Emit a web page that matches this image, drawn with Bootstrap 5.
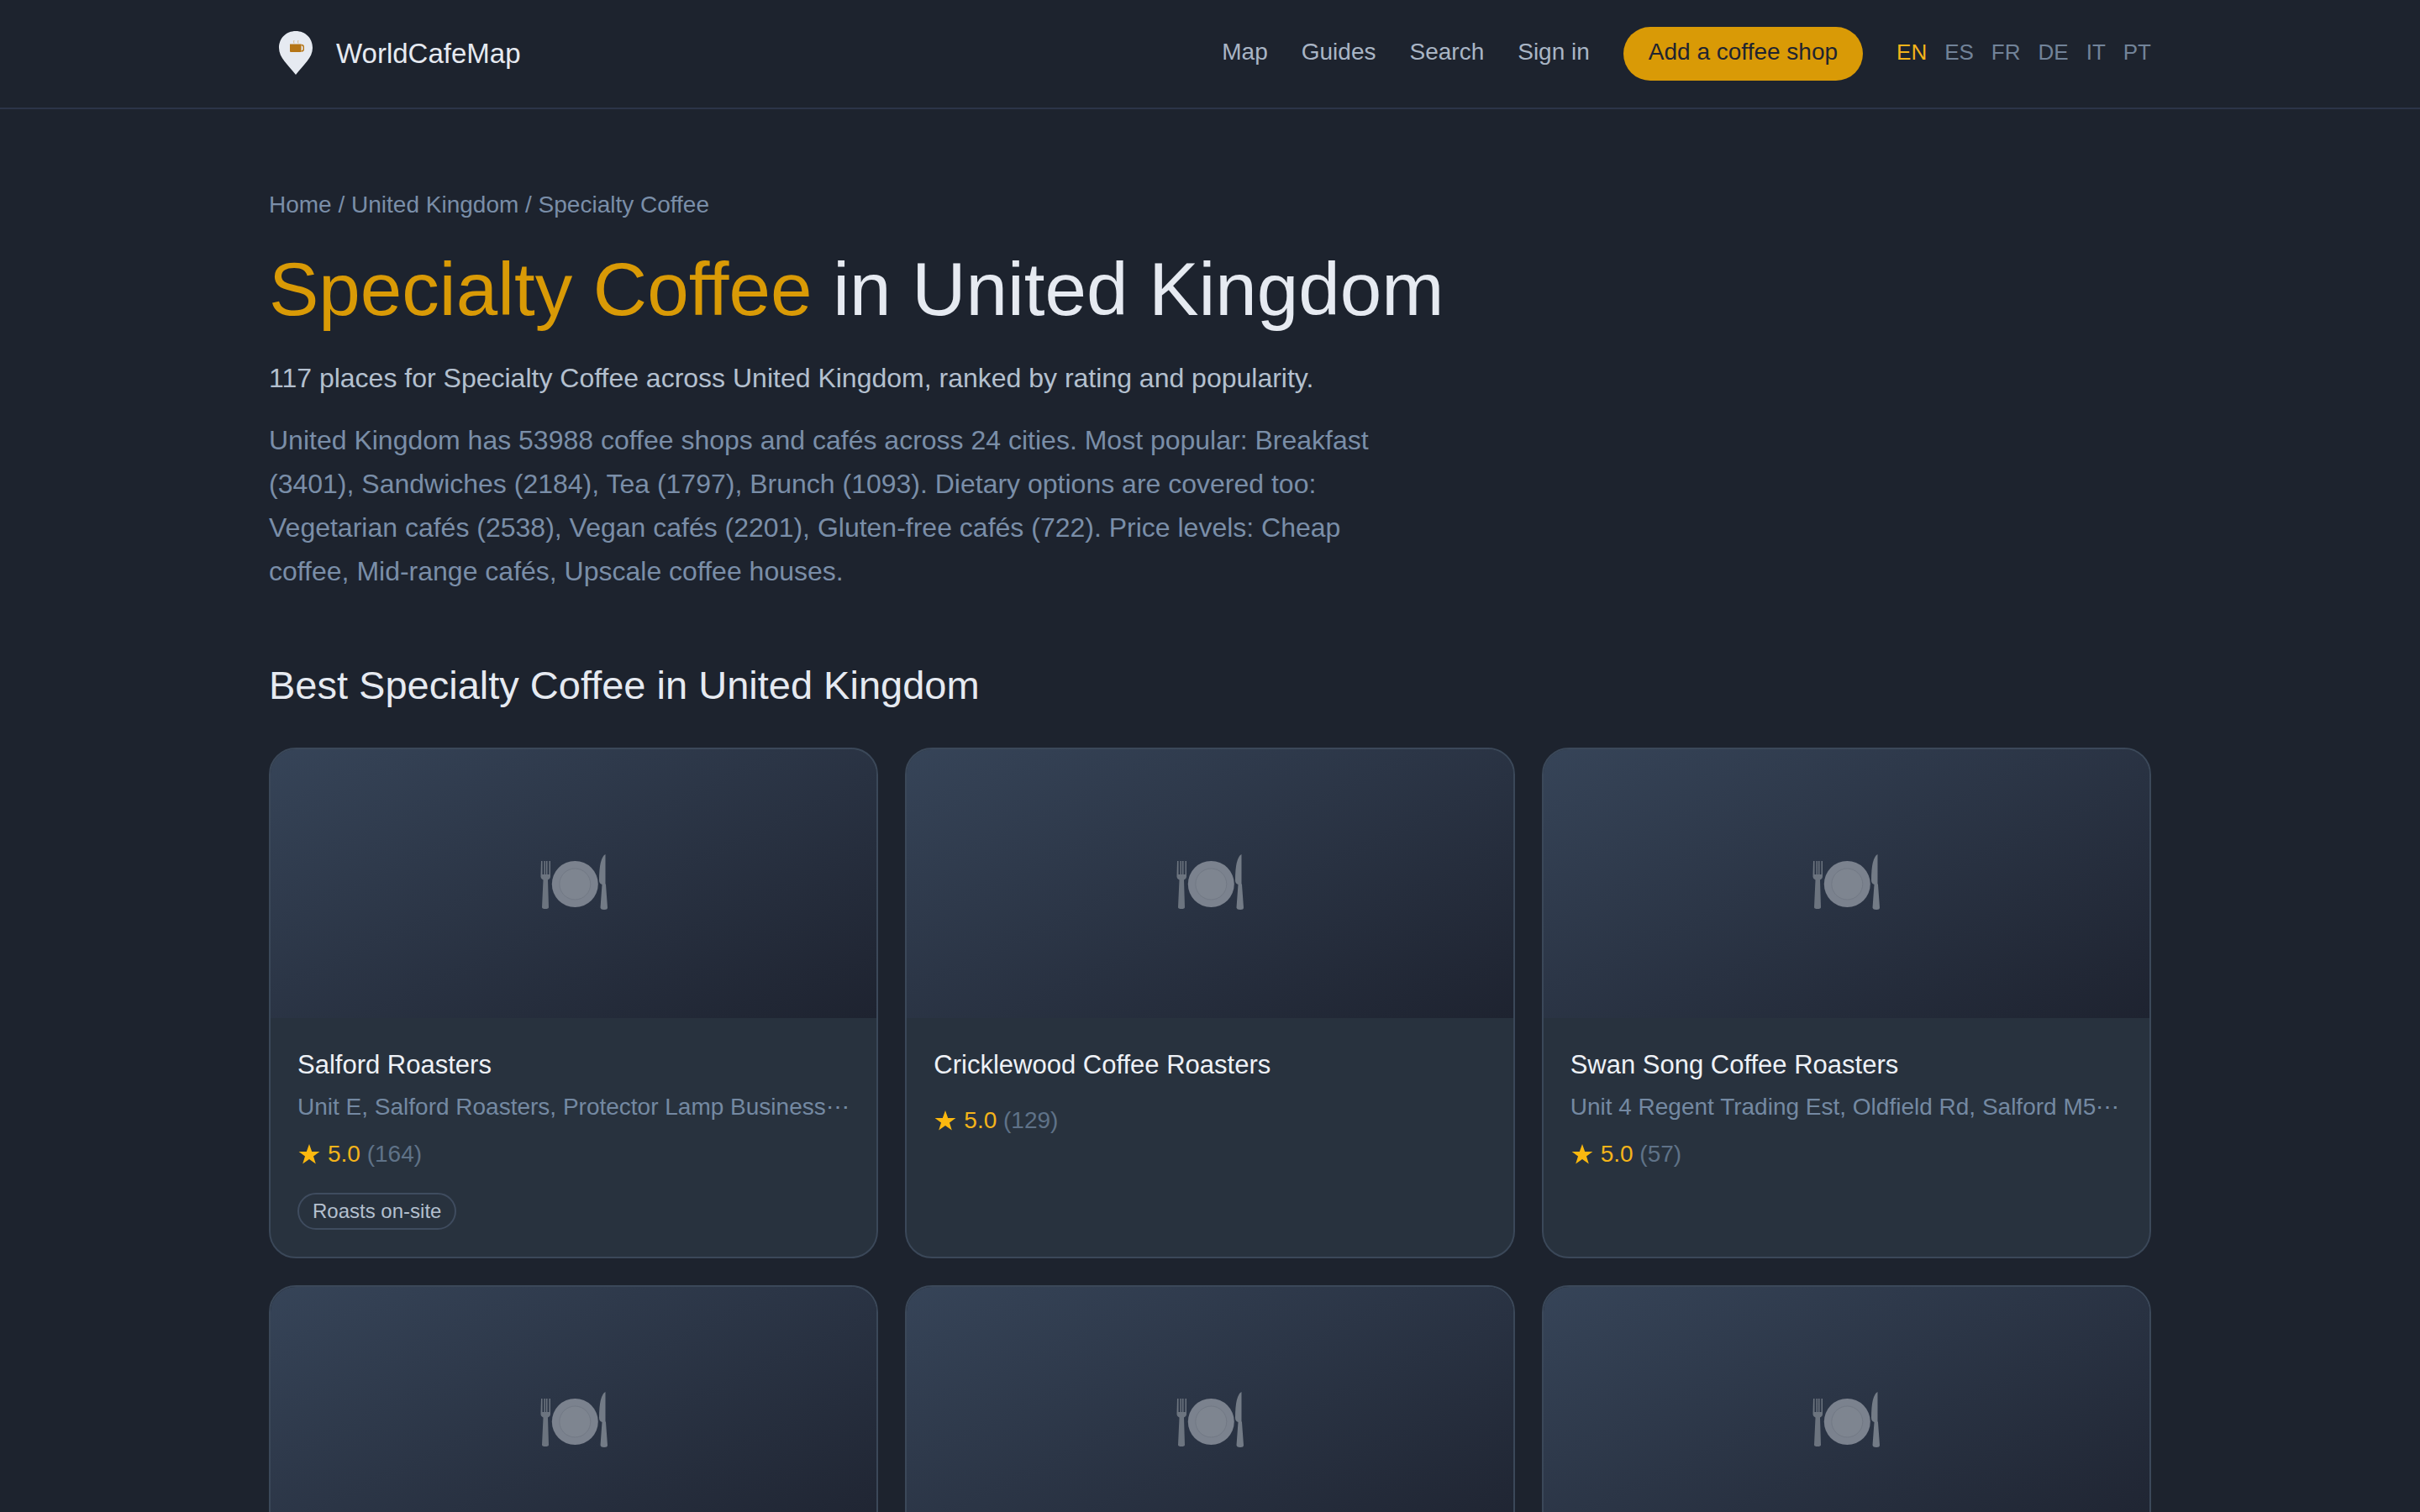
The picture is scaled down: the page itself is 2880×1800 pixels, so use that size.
<!DOCTYPE html>
<html lang="en">
<head>
<meta charset="utf-8">
<meta name="viewport" content="width=device-width, initial-scale=1">
<title>Specialty Coffee in United Kingdom – WorldCafeMap</title>
<link href="https://cdn.jsdelivr.net/npm/bootstrap@5.3.0/dist/css/bootstrap.min.css" rel="stylesheet">
<style>
  body { background: #1d232e; color: #e6eaf1; font-family: "Liberation Sans", Arial, sans-serif; font-size: 28px; line-height: 44px; overflow-x: hidden; }
  a { text-decoration: none; }
  .site-wrap { max-width: 2304px; padding-left: 32px; padding-right: 32px; margin: 0 auto; width: 100%; }
  .site-header { border-bottom: 2px solid #2c3448; padding: 32px 0; }
  .site-header .site-wrap { min-height: 64px; }
  .site-brand { color: #e6eaf1; font-size: 33px; gap: 16px; }
  .site-brand svg { width: 64px; height: 64px; }
  .main-links { gap: 40px; }
  .main-links a { color: #a9b5c5; padding-bottom: 4px; }
  .main-links .btn-add { background: #d99a06; color: #1f2430; padding: 8px 30px 12px; border-radius: 32px; font-size: 28px; line-height: 44px; }
  .main-links .lang-links { gap: 21px; font-size: 26px; }
  .main-links .lang-links a { color: #728399; }
  .main-links .lang-links a.current { color: #f4b41a; }
  .site-main { padding-top: 92px; }
  .crumbs, .crumbs a { color: #7a8ea8; }
  .crumbs { margin-bottom: 24px; }
  .page-title { font-size: 89px; line-height: 108px; font-weight: 400; margin-bottom: 26px; }
  .page-title span { color: #d99a06; }
  .intro-lead { font-size: 32px; line-height: 52px; color: #b4c0cf; margin-bottom: 22px; }
  .intro-text { font-size: 32px; line-height: 52px; color: #7a8ea8; max-width: 1344px; margin-bottom: 78px; }
  .section-title { font-size: 47px; line-height: 64px; font-weight: 400; margin-bottom: 42px; }
  .shop-grid { --bs-gutter-x: 32px; --bs-gutter-y: 32px; }
  .shop { background: #28323e; border: 2px solid #3b4859; border-radius: 32px; overflow: hidden; color: #e6eaf1; height: 100%; }
  .shop-thumb { height: 320px; background: linear-gradient(155deg, #364458, #1e2330); }
  .shop-thumb svg { width: 84px; height: 72px; }
  .shop-body { padding: 32px; min-height: 284px; }
  .shop-name { font-size: 31px; line-height: 48px; font-weight: 400; margin-bottom: 4px; color: #eef1f6; }
  .shop-addr { color: #7489a2; margin-bottom: 12px; }
  .shop-rating { color: #f4b41a; }
  .shop-name + .shop-rating { margin-top: 20px; }
  .shop-rating svg { width: 28px; height: 28px; margin-right: 8px; }
  .shop-rating span { color: #5f7288; }
  .shop-tag { display: inline-block; border: 2px solid #3f4c5f; border-radius: 22px; font-size: 24px; line-height: 40px; padding: 0 16px; color: #b4c0cf; margin-top: 24px; }
</style>
</head>
<body>
<svg class="d-none">
  <symbol id="dish" viewBox="0 0 84 72">
    <path d="M3 9h1.500v16h2V9H8v16h1V9h1.500v16h2V9H14v17q.5 4-3 5.500L12 64q0 2-4 2t-4-2l1.500-32.500Q2 30 2.500 26z" fill="#6c747f"/>
    <circle cx="43.300" cy="36.500" r="27.500" fill="#7b828e"/>
    <circle cx="43.300" cy="36.500" r="18.500" fill="#7e8590" stroke="#727985"/>
    <path d="M79.500 1v35l.5 1 2 27.500q0 2.500-4 2.500t-4.500-2.500L75.500 37Q72 36 72 32q0-27 7.500-31z" fill="#737b86"/>
  </symbol>
  <symbol id="star" viewBox="0 0 28 28"><path d="M14 2l3.200 9h9.200l-7.400 5.600 2.800 9L14 20l-7.800 5.600 2.800-9L1.600 11h9.200z" fill="#fbb80f"/></symbol>
</svg>

<header class="site-header">
  <div class="site-wrap d-flex align-items-center justify-content-between">
    <a href="#" class="site-brand d-flex align-items-center">
      <svg viewBox="0 0 64 64" aria-hidden="true">
        <path d="M32 5C20.500 5 12 13.500 12 25c0 12 11 20 20 32 9-12 20-20 20-32C52 13.500 43.500 5 32 5z" fill="#e6eaf1"/>
        <path d="M25 20.500h13.500V29q0 1-1 1H26q-1 0-1-1z" fill="#b57516"/>
        <path d="M38.500 21.500q2.800 0 2.800 2.500v2.500q0 2.500-2.800 2.500" fill="none" stroke="#b57516" stroke-width="1.400"/>
        <path d="M30 19.500q-1-1.500 0-3.500M35 19.500q-1-1.500 0-3.500" fill="none" stroke="#d5b98c"/>
      </svg>
      <span>WorldCafeMap</span>
    </a>
    <nav class="main-links d-flex align-items-center">
      <a href="#">Map</a>
      <a href="#">Guides</a>
      <a href="#">Search</a>
      <a href="#">Sign in</a>
      <button type="button" class="btn btn-add border-0">Add a coffee shop</button>
      <div class="lang-links d-flex">
        <a href="#" class="current">EN</a><a href="#">ES</a><a href="#">FR</a><a href="#">DE</a><a href="#">IT</a><a href="#">PT</a>
      </div>
    </nav>
  </div>
</header>

<main class="site-main site-wrap">
  <nav class="crumbs" aria-label="Breadcrumb"><a href="#">Home</a> / <a href="#">United Kingdom</a> / Specialty Coffee</nav>
  <h1 class="page-title"><span>Specialty Coffee</span> in United Kingdom</h1>
  <p class="intro-lead">117 places for Specialty Coffee across United Kingdom, ranked by rating and popularity.</p>
  <p class="intro-text">United Kingdom has 53988 coffee shops and cafés across 24 cities. Most popular: Breakfast (3401), Sandwiches (2184), Tea (1797), Brunch (1093). Dietary options are covered too: Vegetarian cafés (2538), Vegan cafés (2201), Gluten-free cafés (722). Price levels: Cheap coffee, Mid-range cafés, Upscale coffee houses.</p>
  <h2 class="section-title">Best Specialty Coffee in United Kingdom</h2>
  <div class="row row-cols-3 shop-grid">
    <div class="col"><a href="#" class="shop d-block">
      <div class="shop-thumb d-flex align-items-center justify-content-center"><svg><use href="#dish"/></svg></div>
      <div class="shop-body">
        <h3 class="shop-name">Salford Roasters</h3>
        <div class="shop-addr text-nowrap">Unit E, Salford Roasters, Protector Lamp Business⋯</div>
        <div class="shop-rating d-flex align-items-center"><svg><use href="#star"/></svg>5.0&nbsp;<span>(164)</span></div>
        <div class="shop-tag">Roasts on-site</div>
      </div></a></div>
    <div class="col"><a href="#" class="shop d-block">
      <div class="shop-thumb d-flex align-items-center justify-content-center"><svg><use href="#dish"/></svg></div>
      <div class="shop-body">
        <h3 class="shop-name">Cricklewood Coffee Roasters</h3>
        <div class="shop-rating d-flex align-items-center"><svg><use href="#star"/></svg>5.0&nbsp;<span>(129)</span></div>
      </div></a></div>
    <div class="col"><a href="#" class="shop d-block">
      <div class="shop-thumb d-flex align-items-center justify-content-center"><svg><use href="#dish"/></svg></div>
      <div class="shop-body">
        <h3 class="shop-name">Swan Song Coffee Roasters</h3>
        <div class="shop-addr text-nowrap">Unit 4 Regent Trading Est, Oldfield Rd, Salford M5⋯</div>
        <div class="shop-rating d-flex align-items-center"><svg><use href="#star"/></svg>5.0&nbsp;<span>(57)</span></div>
      </div></a></div>
    <div class="col"><a href="#" class="shop d-block"><div class="shop-thumb d-flex align-items-center justify-content-center"><svg><use href="#dish"/></svg></div></a></div>
    <div class="col"><a href="#" class="shop d-block"><div class="shop-thumb d-flex align-items-center justify-content-center"><svg><use href="#dish"/></svg></div></a></div>
    <div class="col"><a href="#" class="shop d-block"><div class="shop-thumb d-flex align-items-center justify-content-center"><svg><use href="#dish"/></svg></div></a></div>
  </div>
</main>
<script src="https://cdn.jsdelivr.net/npm/bootstrap@5.3.0/dist/js/bootstrap.bundle.min.js"></script>
</body>
</html>
